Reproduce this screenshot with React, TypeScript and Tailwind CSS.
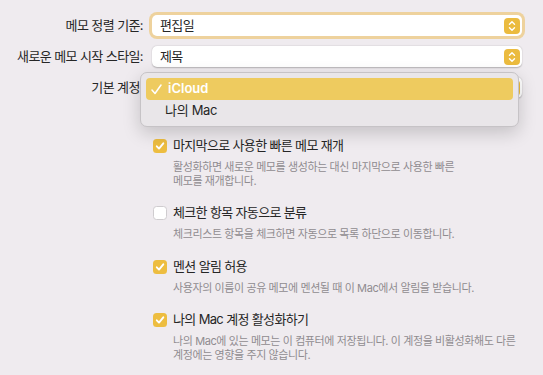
import { ReactNode } from 'react';

const Stepper = () => (
    <div className="w-[16px] h-[16px] rounded-[4px] bg-[#ebbb3f] flex items-center justify-center">
        <svg width="8" height="12" viewBox="0 0 8 12" fill="none" stroke="white" strokeWidth="1.4" strokeLinecap="round" strokeLinejoin="round">
            <path d="M1.5 4.2 L4 1.7 L6.5 4.2" />
            <path d="M1.5 7.8 L4 10.3 L6.5 7.8" />
        </svg>
    </div>
);

const SelectRow = ({ label, value, focused }: { label: string; value: string; focused?: boolean }) => (
    <div className="flex items-center h-[21px]">
        <div className="w-[144px] text-right text-[13px] tracking-[-0.6px] text-[#262626] pr-[1px] whitespace-nowrap">{label}</div>
        <div
            className={
                focused
                    ? 'ml-[8px] w-[370px] h-[21px] bg-white rounded-[5px] flex items-center justify-between pl-[8px] pr-[2px] shadow-[0_0_0_3px_rgba(236,190,90,0.55)]'
                    : 'ml-[8px] w-[370px] h-[21px] bg-white rounded-[5px] flex items-center justify-between pl-[8px] pr-[2px] shadow-[0_0.5px_1.5px_rgba(0,0,0,0.25)]'
            }
        >
            <span className="text-[13px] tracking-[-0.6px] text-[#262626]">{value}</span>
            <Stepper />
        </div>
    </div>
);

const Check = ({ checked }: { checked: boolean }) =>
    checked ? (
        <div className="w-[14px] h-[14px] rounded-[3.5px] bg-[#edbd40] flex items-center justify-center shrink-0">
            <svg width="10" height="10" viewBox="0 0 10 10" fill="none" stroke="white" strokeWidth="1.9" strokeLinecap="round" strokeLinejoin="round">
                <path d="M1.8 5.3 L4 7.6 L8.3 2.3" />
            </svg>
        </div>
    ) : (
        <div className="w-[14px] h-[14px] rounded-[3.5px] bg-white border border-[#cfcccf] shrink-0" />
    );

const Option = ({ checked, label, children }: { checked: boolean; label: string; children: ReactNode }) => (
    <div className="flex flex-col">
        <div className="flex items-center h-[16px]">
            <Check checked={checked} />
            <span className="ml-[6px] text-[13px] tracking-[-0.65px] text-[#262626] whitespace-nowrap">{label}</span>
        </div>
        <div className="pl-[20px] mt-[7px] text-[11px] leading-[13.5px] tracking-[-0.4px] text-[#8f8c8f] whitespace-nowrap">{children}</div>
    </div>
);

const App = () => {
    return (
        <div
            className="relative w-[543px] h-[375px] overflow-hidden bg-[#efebef]"
            style={{ fontFamily: 'Inter, "Noto Sans CJK KR", sans-serif' }}
        >
            <div className="pt-[15px] flex flex-col gap-[10px]">
                <SelectRow label="메모 정렬 기준:" value="편집일" focused />
                <SelectRow label="새로운 메모 시작 스타일:" value="제목" />
                {/* value is covered by the open menu */}
                <SelectRow label="기본 계정:" value="" />
            </div>

            <div className="pl-[153px] pt-[40px] flex flex-col gap-[17px]">
                <Option checked label="마지막으로 사용한 빠른 메모 재개">
                    활성화하면 새로운 메모를 생성하는 대신 마지막으로 사용한 빠른<br />
                    메모를 재개합니다.
                </Option>
                <Option checked={false} label="체크한 항목 자동으로 분류">
                    체크리스트 항목을 체크하면 자동으로 목록 하단으로 이동합니다.
                </Option>
                <Option checked label="멘션 알림 허용">
                    사용자의 이름이 공유 메모에 멘션될 때 이 Mac에서 알림을 받습니다.
                </Option>
                <Option checked label="나의 Mac 계정 활성화하기">
                    나의 Mac에 있는 메모는 이 컴퓨터에 저장됩니다. 이 계정을 비활성화해도 다른<br />
                    계정에는 영향을 주지 않습니다.
                </Option>
            </div>

            {/* popup menu over the 기본 계정 select */}
            <div className="absolute left-[140px] top-[72px] w-[379px] h-[55px] rounded-[7px] bg-[#e9e6e9] border border-[#c6c3c6] shadow-[0_6px_18px_rgba(0,0,0,0.18)] p-[5px]">
                <div className="h-[22px] rounded-[4px] bg-[#eecb5f] flex items-center pl-[5px]">
                    <svg className="shrink-0" width="11" height="11" viewBox="0 0 11 11" fill="none" stroke="white" strokeWidth="1.5" strokeLinecap="round" strokeLinejoin="round">
                        <path d="M1 6 L4 9.5 L10 1" />
                    </svg>
                    <span className="ml-[6px] text-[13px] text-white font-semibold">iCloud</span>
                </div>
                <div className="h-[22px] flex items-center pl-[19px]">
                    <span className="text-[13px] tracking-[-0.3px] text-[#262626]">나의 Mac</span>
                </div>
            </div>
        </div>
    );
};

export default App;
